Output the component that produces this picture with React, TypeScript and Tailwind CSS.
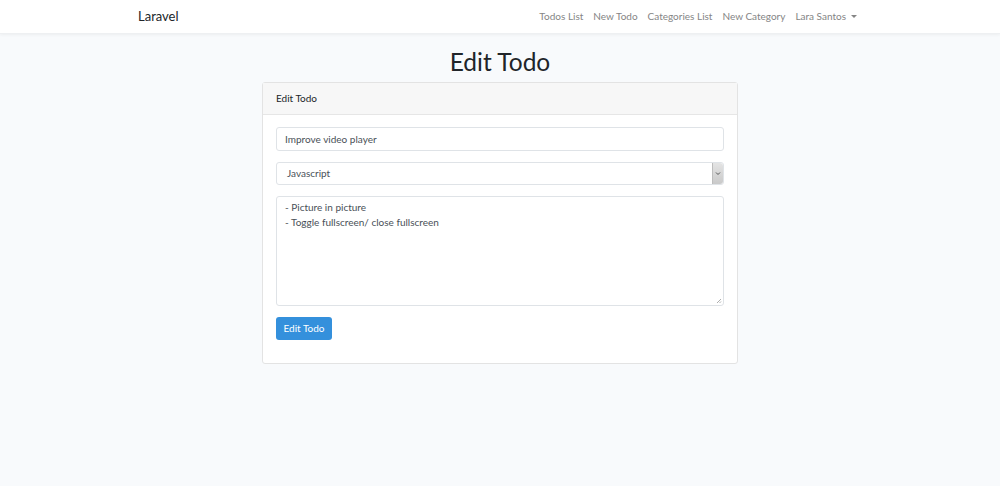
import React from 'react';

const navLinks = ['Todos List', 'New Todo', 'Categories List', 'New Category'];

const App: React.FC = () => {
  return (
    <div
      className="min-h-[486px] bg-[#f8fafc] text-[#212529]"
      style={{ fontFamily: 'Lato, "Noto Sans", sans-serif' }}
    >
      <nav className="h-[34px] bg-white shadow-[0_1px_3px_rgba(0,0,0,0.05)] border-b border-[#eef0f2]">
        <div className="w-[724px] mx-auto h-full flex items-center justify-between">
          <span className="text-[13px] text-[#212529]">Laravel</span>
          <ul className="flex items-center text-[10px] text-[#858585]">
            {navLinks.map((l) => (
              <li key={l} className="px-[5px]">
                {l}
              </li>
            ))}
            <li className="pl-[5px] pr-[5px] flex items-center">
              Lara Santos
              <span className="ml-[5px] inline-block w-0 h-0 border-l-[3px] border-r-[3px] border-t-[3px] border-l-transparent border-r-transparent border-t-[#858585]" />
            </li>
          </ul>
        </div>
      </nav>

      <h1 className="text-center text-[24.5px] leading-[30px] mt-[13px] mb-[5px]">Edit Todo</h1>

      <div className="w-[476px] mx-auto bg-white border border-[#e3e3e3] rounded-[3px]">
        <div className="h-[32px] px-[13px] flex items-center bg-[#f7f7f7] border-b border-[#e6e6e6] text-[10px]">
          Edit Todo
        </div>
        <div className="px-[13px] pt-[12px] pb-[23px] flex flex-col gap-[11px] text-[10px] text-[#495057]">
          <div className="h-[24px] border border-[#dfe3e7] rounded-[3px] px-[8px] flex items-center">
            Improve video player
          </div>
          <div className="h-[23px] border border-[#dfe3e7] rounded-[3px] pl-[10px] flex items-center justify-between">
            <span>Javascript</span>
            <span className="w-[11px] h-full bg-gradient-to-b from-[#e4e4e4] to-[#c9c9c9] border-l border-[#bdbdbd] rounded-r-[3px] flex items-center justify-center">
              <svg width="6" height="5" viewBox="0 0 6 5">
                <path d="M1 1.5 L3 3.5 L5 1.5" stroke="#555" fill="none" strokeWidth="1" />
              </svg>
            </span>
          </div>
          <div className="relative h-[110px] border border-[#dfe3e7] rounded-[3px] px-[8px] pt-[3px] leading-[15px]">
            <div>- Picture in picture</div>
            <div>- Toggle fullscreen/ close fullscreen</div>
            <svg className="absolute right-[1px] bottom-[1px]" width="6" height="6" viewBox="0 0 6 6">
              <path d="M5 1 L1 5 M5 3.5 L3.5 5" stroke="#999" strokeWidth="0.8" />
            </svg>
          </div>
          <div>
            <button className="h-[23px] w-[56px] bg-[#3490dc] text-white text-[10px] rounded-[3px]">
              Edit Todo
            </button>
          </div>
        </div>
      </div>
    </div>
  );
};

export default App;
